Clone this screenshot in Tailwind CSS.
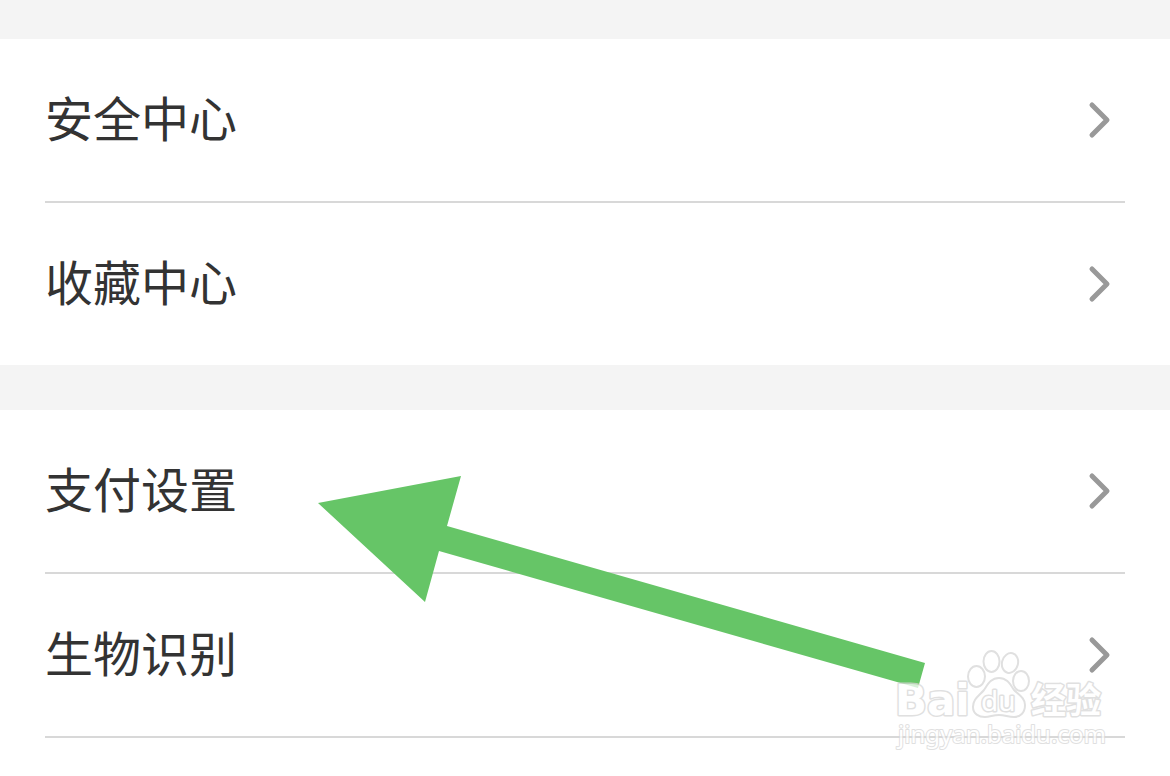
<!DOCTYPE html>
<html lang="zh-CN">
<head>
    <meta charset="UTF-8">
    <meta name="viewport" content="width=device-width, initial-scale=1.0">
    <title>设置</title>
    <script src="https://cdn.jsdelivr.net/npm/@tailwindcss/browser@4"></script>
</head>
<body class="bg-white font-['Noto_Sans_CJK_SC',sans-serif] text-[#333333]">
    <main class="relative min-h-screen overflow-hidden">
        <div class="h-[39px] bg-[#f4f4f4]"></div>
        <nav class="px-[45px]">
            <a href="#security" class="flex items-center justify-between h-[164px] pr-[14px] border-b-2 border-[#d8d8d8]">
                <span class="pb-2 text-[48px] leading-[72px]">安全中心</span>
                <svg class="w-6 h-10" viewBox="0 0 24 40" fill="none" stroke="#999" stroke-width="5" stroke-linecap="round" stroke-linejoin="round"><path d="M5 5l15 15L5 35"/></svg>
            </a>
            <a href="#favorites" class="flex items-center justify-between h-[162px] pr-[14px]">
                <span class="pb-2 text-[48px] leading-[72px]">收藏中心</span>
                <svg class="w-6 h-10" viewBox="0 0 24 40" fill="none" stroke="#999" stroke-width="5" stroke-linecap="round" stroke-linejoin="round"><path d="M5 5l15 15L5 35"/></svg>
            </a>
        </nav>
        <div class="h-[45px] bg-[#f4f4f4]"></div>
        <nav class="px-[45px]">
            <a href="#payment" class="flex items-center justify-between h-[164px] pr-[14px] border-b-2 border-[#d8d8d8]">
                <span class="pb-2 text-[48px] leading-[72px]">支付设置</span>
                <svg class="w-6 h-10" viewBox="0 0 24 40" fill="none" stroke="#999" stroke-width="5" stroke-linecap="round" stroke-linejoin="round"><path d="M5 5l15 15L5 35"/></svg>
            </a>
            <a href="#biometric" class="flex items-center justify-between h-[164px] pr-[14px] border-b-2 border-[#d8d8d8]">
                <span class="pb-2 text-[48px] leading-[72px]">生物识别</span>
                <svg class="w-6 h-10" viewBox="0 0 24 40" fill="none" stroke="#999" stroke-width="5" stroke-linecap="round" stroke-linejoin="round"><path d="M5 5l15 15L5 35"/></svg>
            </a>
        </nav>

        <!-- Arrow pointing at the payment row -->
        <svg class="absolute left-[318px] top-[476px] w-[608px] h-[212px] pointer-events-none" viewBox="318 476 608 212" aria-hidden="true">
            <path fill="#66c567" d="M318 503L461 476L447 526L925 663L918 688L439 551L425 602Z"/>
        </svg>

        <!-- Watermark -->
        <svg class="absolute right-[60px] top-[646px] w-[220px] h-[110px] pointer-events-none" viewBox="890 646 220 110" aria-label="Baidu 经验">
            <g fill="#fff" fill-opacity=".7" stroke="#e0e0e0" stroke-width="2">
                <ellipse cx="976.5" cy="676.5" rx="8.5" ry="10.5"/>
                <ellipse cx="991.5" cy="661.5" rx="8" ry="10.5"/>
                <ellipse cx="1010" cy="663" rx="8" ry="10" transform="rotate(15 1010 663)"/>
                <ellipse cx="1021" cy="681" rx="8" ry="10"/>
                <path d="M999 678C991 678 988 684 984 690C979 696 973 699 973 707C973 714 979 717 985 717C990 717 993 715 999 715C1005 715 1008 717 1014 717C1020 717 1025 713 1025 705C1025 698 1019 695 1014 690C1010 684 1007 678 999 678Z"/>
            </g>
            <g fill="#fff" stroke="#d6d6d6" stroke-width="3" stroke-linejoin="round" paint-order="stroke" opacity=".75">
                <text x="895" y="715" font-family="'DejaVu Sans', sans-serif" font-size="42" font-weight="700">Bai</text>
                <text x="981" y="711" font-family="'Noto Sans', sans-serif" font-size="28">du</text>
                <text x="1031" y="713" font-family="'Noto Sans CJK SC', sans-serif" font-size="35" font-weight="700">经验</text>
                <text x="898" y="743" font-family="'Noto Sans', sans-serif" font-size="24" stroke-width="2">jingyan.baidu.com</text>
            </g>
        </svg>
    </main>
</body>
</html>
